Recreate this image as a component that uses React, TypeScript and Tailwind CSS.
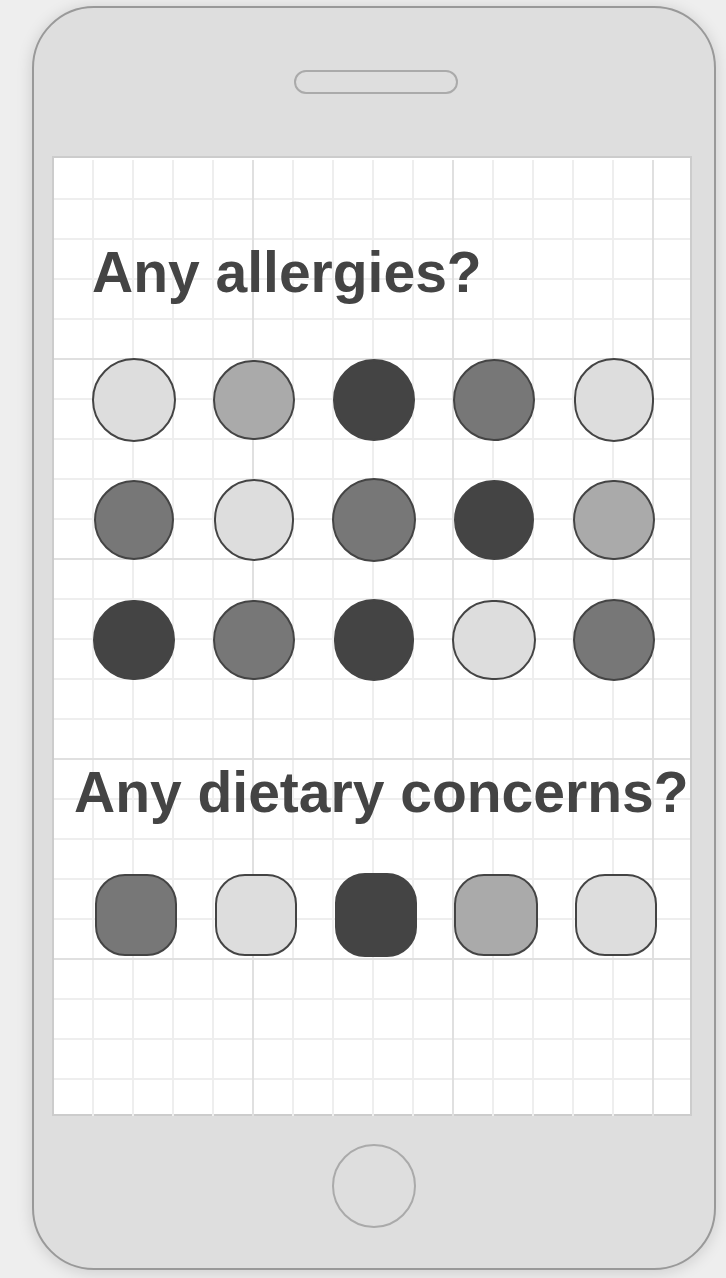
type Swatch = { size: string; tone: string };

const LIGHT = "bg-[#ddd]";
const SILVER = "bg-[#aaa]";
const GRAY = "bg-[#777]";
const DARK = "bg-[#444]";

const allergies: Swatch[] = [
  { size: "w-[84px] h-[84px]", tone: LIGHT },
  { size: "w-[82px] h-[80px]", tone: SILVER },
  { size: "w-[82px] h-[82px]", tone: DARK },
  { size: "w-[82px] h-[82px]", tone: GRAY },
  { size: "w-[80px] h-[84px]", tone: LIGHT },
  { size: "w-[80px] h-[80px]", tone: GRAY },
  { size: "w-[80px] h-[82px]", tone: LIGHT },
  { size: "w-[84px] h-[84px]", tone: GRAY },
  { size: "w-[80px] h-[80px]", tone: DARK },
  { size: "w-[82px] h-[80px]", tone: SILVER },
  { size: "w-[82px] h-[80px]", tone: DARK },
  { size: "w-[82px] h-[80px]", tone: GRAY },
  { size: "w-[80px] h-[82px]", tone: DARK },
  { size: "w-[84px] h-[80px]", tone: LIGHT },
  { size: "w-[82px] h-[82px]", tone: GRAY },
];

const diets: Swatch[] = [
  { size: "w-[82px] h-[82px]", tone: GRAY },
  { size: "w-[82px] h-[82px]", tone: LIGHT },
  { size: "w-[82px] h-[84px]", tone: DARK },
  { size: "w-[84px] h-[82px]", tone: SILVER },
  { size: "w-[82px] h-[82px]", tone: LIGHT },
];

function Options({
  items,
  shape,
  label,
  inset,
}: {
  items: Swatch[];
  shape: string;
  label: string;
  inset: string;
}) {
  return (
    <div className={`grid auto-rows-[120px] grid-cols-5 place-items-center ${inset}`}>
      {items.map((item, i) => (
        <button
          key={i}
          type="button"
          aria-label={`${label} ${i + 1}`}
          className={`border-2 border-[#444] ${shape} ${item.size} ${item.tone}`}
        />
      ))}
    </div>
  );
}

// Graph paper: a faint line every 40px and a stronger one every 200px.
function GraphPaper() {
  return (
    <div
      aria-hidden="true"
      className="absolute inset-x-0 top-[2px] -bottom-[2px] -z-10 bg-[repeating-linear-gradient(to_right,transparent_0_198px,#e0e0e0_198px_200px),repeating-linear-gradient(to_bottom,transparent_0_198px,#e0e0e0_198px_200px),repeating-linear-gradient(to_right,transparent_0_38px,#eee_38px_40px),repeating-linear-gradient(to_bottom,transparent_0_38px,#eee_38px_40px)]"
    />
  );
}

export default function App() {
  return (
    <div className="min-h-screen bg-[#eee] pt-[6px] pr-[10px] pb-2 pl-8 font-['Liberation_Sans',Arial,sans-serif] text-[#444]">
      <div className="rounded-[62px] border-2 border-[#999] bg-[#dedede] pt-[62px] pb-10 shadow-[0_2px_16px_rgba(0,0,0,0.15)]">
        <div className="flex justify-center pl-1">
          <div className="h-6 w-[164px] rounded-full border-2 border-[#aaa]" />
        </div>

        <main className="relative isolate mt-[62px] mr-[22px] ml-[18px] border-2 border-[#ccc] bg-white pt-[82px] pb-[139px]">
          <GraphPaper />
          <section>
            <h2 className="mb-9 pl-[38px] text-[57px] leading-[64px] font-bold whitespace-nowrap">Any allergies?</h2>
            <Options items={allergies} shape="rounded-full" label="Allergy" inset="pl-5 pr-4" />
          </section>
          <section className="mt-[60px]">
            <h2 className="mb-[31px] pl-5 text-[57px] leading-[64px] font-bold whitespace-nowrap">
              Any dietary concerns?
            </h2>
            <Options items={diets} shape="rounded-[30px]" label="Dietary concern" inset="pl-[22px] pr-[14px]" />
          </section>
        </main>

        <div className="mt-7 flex justify-center">
          <button type="button" aria-label="Home" className="size-[84px] rounded-full border-2 border-[#aaa]" />
        </div>
      </div>
    </div>
  );
}
